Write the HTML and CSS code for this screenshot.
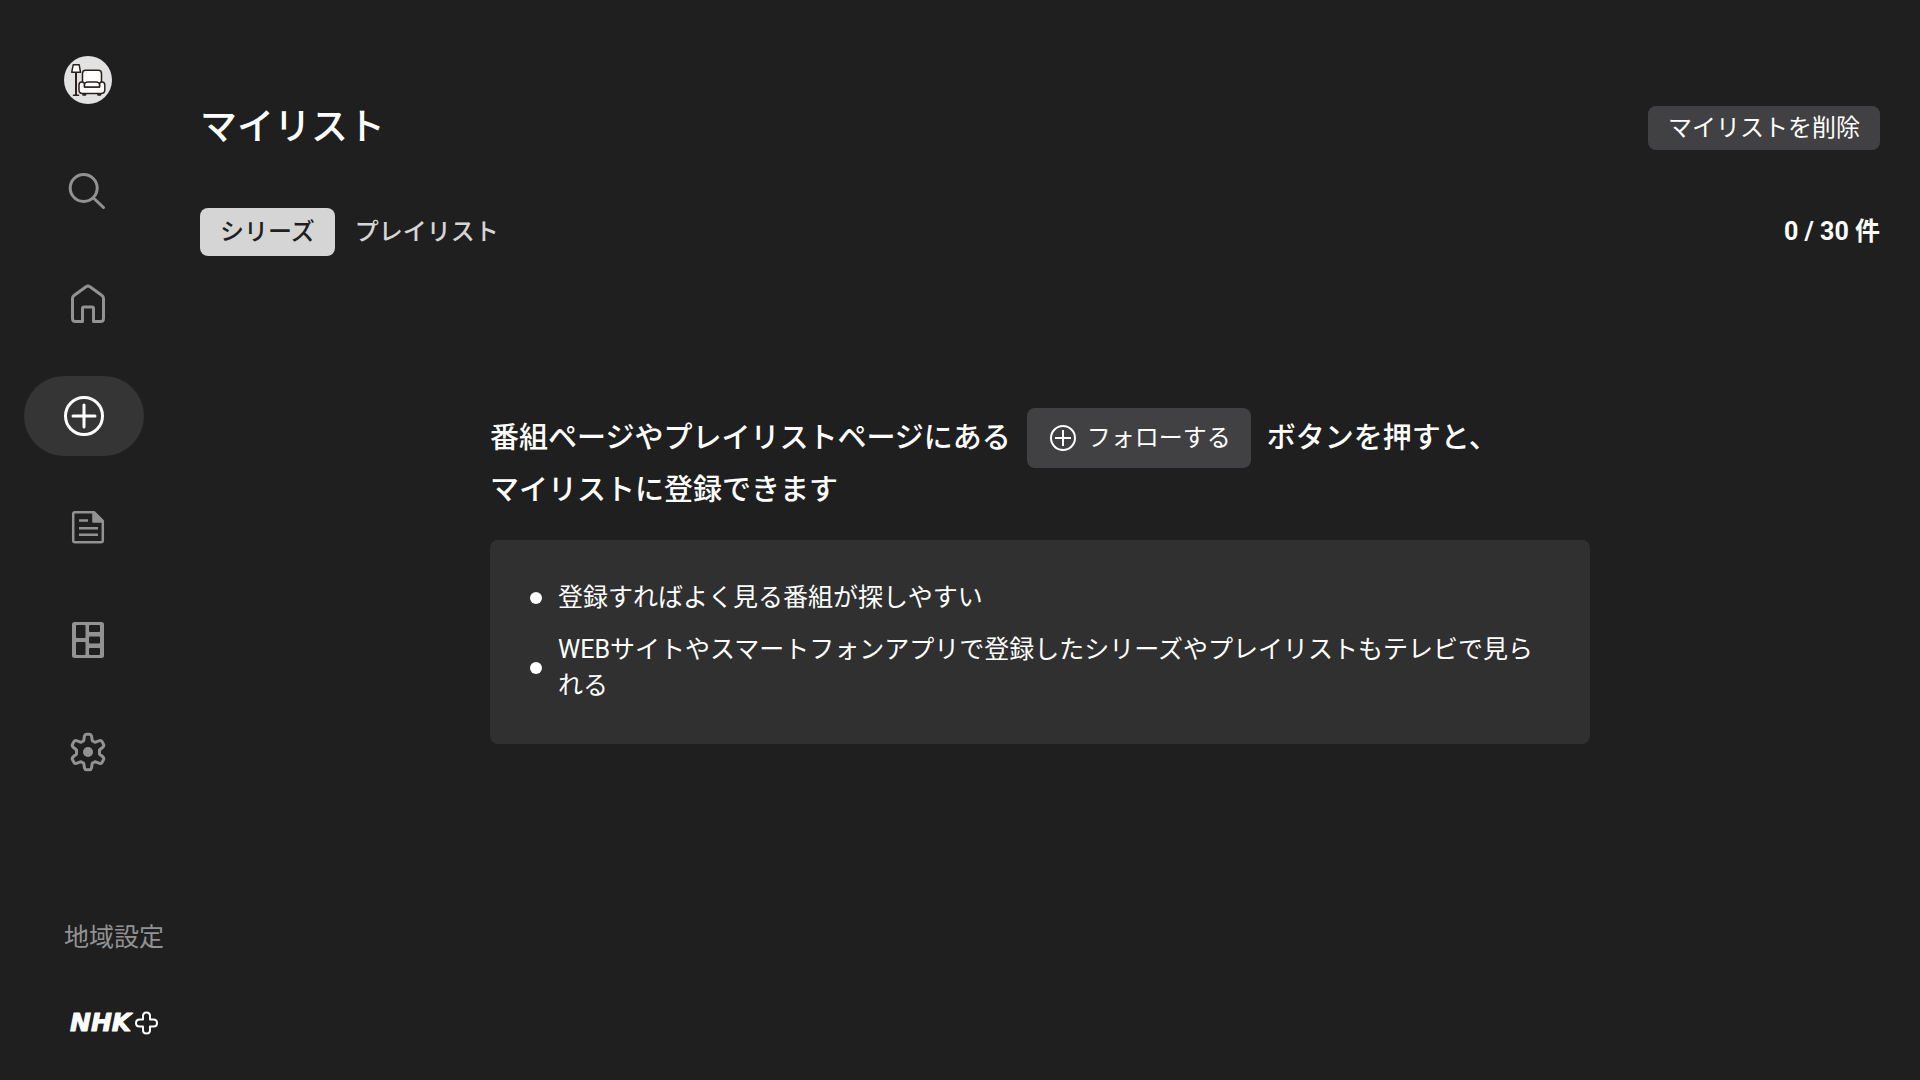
FILE: index.html
```
<!DOCTYPE html>
<html lang="ja">
<head>
    <meta charset="UTF-8">
    <meta name="viewport" content="width=device-width, initial-scale=1.0">
    <title>マイリスト | NHK+</title>
    <link rel="stylesheet" href="styles.css">
</head>
<body>
    <aside class="sidebar">
        <nav class="menu">
            <a class="menu-item" href="#" aria-label="プロフィール">
                <svg width="48" height="48" viewBox="0 0 48 48" fill="#fff" stroke="#2b211e" stroke-width="1.5" stroke-linejoin="round" stroke-linecap="round">
                    <circle cx="24" cy="24" r="24" fill="#e2e2e2" stroke="none"/>
                    <path d="M12 17v22" stroke-width="2"/>
                    <path d="M9.500 39.300h5M9.200 8.800h6l1.300 7.500H7.700z"/>
                    <path d="M19 37.500h2.500v1.500H19zM34 37.500h2.500v1.500H34z"/>
                    <path d="M18.500 28V17.500q0-3.200 3.200-3.200h12.600q3.200 0 3.200 3.200V28z"/>
                    <path d="M20.500 31v-2.500q0-2.500-2.700-2.500-2.800 0-2.800 3v5q0 3.500 3.500 3.500h18.500q3.800 0 3.800-3.500v-5q0-3-2.800-3-2.500 0-2.500 2.500V31z"/>
                    <path d="M20.500 31v-2q0-3 3.500-3h8q3.500 0 3.500 3v2z"/>
                </svg>
            </a>
            <a class="menu-item" href="#" aria-label="検索">
                <svg width="40" height="40" viewBox="0 0 40 40" fill="none" stroke="currentColor" stroke-width="3" stroke-linecap="round">
                    <circle cx="15.700" cy="16" r="13.500"/>
                    <path d="M25.500 26L35.500 35.500"/>
                </svg>
            </a>
            <a class="menu-item" href="#" aria-label="ホーム">
                <svg width="40" height="40" viewBox="0 0 40 40" fill="none" stroke="currentColor" stroke-width="3" stroke-linejoin="round">
                    <path d="M7.500 37.500q-3 0-3-3V14.500q0-2 1.500-3L18 2.800q2-1.600 4 0L34 11.500q1.500 1 1.500 3V34.500q0 3-3 3H25.500V24.500q0-1.500-1.500-1.500h-8q-1.500 0-1.500 1.500V37.500z"/>
                </svg>
            </a>
            <a class="menu-item active" href="#" aria-label="マイリスト" aria-current="page">
                <svg width="40" height="40" viewBox="0 0 40 40" fill="none" stroke="currentColor" stroke-width="3" stroke-linecap="round">
                    <circle cx="20" cy="20" r="18.500"/>
                    <path d="M20 9v22M9 20h22"/>
                </svg>
            </a>
            <a class="menu-item" href="#" aria-label="ニュース">
                <svg width="40" height="40" viewBox="0 0 40 40" fill="none" stroke="currentColor" stroke-width="2.500" stroke-linejoin="round">
                    <path d="M26 4.200H7q-1.800 0-1.800 1.800v26.500q0 1.800 1.800 1.800h26q1.800 0 1.800-1.800V13z"/>
                    <path d="M25 4.200V14h10z" fill="currentColor" stroke-width="1.500"/>
                    <path d="M11 12.500h9M11 20.300h19M11 26.700h19"/>
                </svg>
            </a>
            <a class="menu-item" href="#" aria-label="ジャンル">
                <svg width="40" height="40" viewBox="0 0 40 40">
                    <rect x="4" y="2" width="32" height="36" rx="2.500" fill="currentColor"/>
                    <g fill="#1f1f1f">
                        <rect x="8" y="5" width="9.500" height="13" rx="1"/>
                        <rect x="8" y="22" width="9.500" height="13" rx="1"/>
                        <rect x="21" y="5" width="11" height="7" rx="1"/>
                        <rect x="21" y="16.500" width="11" height="7" rx="1"/>
                        <rect x="21" y="28" width="11" height="7" rx="1"/>
                    </g>
                </svg>
            </a>
            <a class="menu-item" href="#" aria-label="設定">
                <svg width="40" height="40" viewBox="0 0 40 40" fill="none" stroke="currentColor" stroke-width="3" stroke-linejoin="round">
                    <path d="M16.500 4Q17 2.300 18.500 2.300H21.500Q23 2.300 23.500 4L24.300 8.700L27 10.300L31.500 8.600Q33.200 8.200 34 9.600L35.600 12.400Q36.200 13.800 35 15L31.500 18V22L35 25Q36.200 26.200 35.600 27.600L34 30.400Q33.200 31.800 31.500 31.400L27 29.700L24.300 31.300L23.500 36Q23 37.700 21.500 37.700H18.500Q17 37.700 16.500 36L15.700 31.300L13 29.700L8.500 31.400Q6.800 31.800 6 30.400L4.400 27.600Q3.800 26.200 5 25L8.500 22V18L5 15Q3.800 13.800 4.400 12.400L6 9.600Q6.800 8.200 8.500 8.600L13 10.300L15.700 8.700Z"/>
                    <circle cx="20" cy="20" r="5" fill="currentColor" stroke="none"/>
                </svg>
            </a>
        </nav>
        <div class="sidebar-bottom">
            <a class="region" href="#">地域設定</a>
            <svg class="logo" width="96" height="32" viewBox="0 0 96 32" role="img" aria-label="NHK+">
                <text class="logo-text" x="6" y="23">NHK</text>
                <path d="M79 8q0-3.500 3.500-3.500T86 8v3.500h3.500q3.500 0 3.500 3.500t-3.500 3.500H86V22q0 3.500-3.500 3.500T79 22v-3.500h-3.500q-3.500 0-3.500-3.500t3.500-3.500H79z" fill="none" stroke="#fff" stroke-width="2" stroke-linejoin="round"/>
            </svg>
        </div>
    </aside>

    <main class="content">
        <header class="header">
            <h1>マイリスト</h1>
            <button class="delete-btn" type="button">マイリストを削除</button>
        </header>

        <div class="toolbar">
            <div class="tabs" role="tablist">
                <button class="tab selected" type="button" role="tab" aria-selected="true">シリーズ</button>
                <button class="tab" type="button" role="tab" aria-selected="false">プレイリスト</button>
            </div>
            <p class="count">0 / 30 件</p>
        </div>

        <section class="guide">
            <div class="guide-title">
                <div class="guide-row">
                    <span>番組ページやプレイリストページにある</span>
                    <button class="follow-btn" type="button">
                        <svg width="32" height="32" viewBox="0 0 32 32" fill="none" stroke="currentColor" stroke-width="2">
                            <circle cx="16" cy="16" r="12"/>
                            <path d="M16 8v16M8 16h16"/>
                        </svg>
                        フォローする
                    </button>
                    <span>ボタンを押すと、</span>
                </div>
                <p>マイリストに登録できます</p>
            </div>
            <ul class="guide-list">
                <li>登録すればよく見る番組が探しやすい</li>
                <li>WEBサイトやスマートフォンアプリで登録したシリーズやプレイリストもテレビで見られる</li>
            </ul>
        </section>
    </main>
</body>
</html>
```
FILE: styles.css
```
* {
    box-sizing: border-box;
    margin: 0;
    padding: 0;
}
body {
    display: flex;
    min-height: 100vh;
    background-color: #1f1f1f;
    color: #fff;
    font-family: Roboto, "Noto Sans CJK JP", sans-serif;
    font-size: 25px;
    line-height: 36px;
}
a {
    color: #929292;
    text-decoration: none;
}
button {
    border: none;
    border-radius: 8px;
    color: #fff;
    font-family: inherit;
    font-size: 24px;
    line-height: 36px;
    cursor: pointer;
}
svg {
    display: block;
    flex-shrink: 0;
}

/* sidebar */
.sidebar {
    display: flex;
    flex-direction: column;
    justify-content: space-between;
    flex-shrink: 0;
    width: 200px;
    padding: 40px 0;
}
.menu {
    display: flex;
    flex-direction: column;
    gap: 32px;
    padding-left: 24px;
}
.menu-item {
    display: flex;
    align-items: center;
    justify-content: center;
    width: 120px;
    height: 80px;
    padding-left: 8px;
    border-radius: 40px;
}
.menu-item.active {
    padding-left: 0;
    background-color: #353535;
    color: #fff;
}
.sidebar-bottom {
    display: flex;
    flex-direction: column;
    gap: 52px;
    padding-left: 64px;
}
.logo-text {
    fill: #fff;
    stroke: #fff;
    stroke-width: 1px;
    stroke-linejoin: round;
    font: italic bold 25px "DejaVu Sans", sans-serif;
}

/* main */
.content {
    flex: 1;
    padding: 96px 40px 40px 0;
}
.header,
.toolbar {
    display: flex;
    align-items: center;
    justify-content: space-between;
}
.header {
    height: 64px;
}
h1 {
    font-size: 37px;
    line-height: 56px;
    font-weight: 500;
}
.delete-btn {
    padding: 4px 20px;
    background-color: #414143;
}
.toolbar {
    margin-top: 48px;
}
.tabs {
    display: flex;
}
.tab {
    padding: 6px 20px;
    background-color: transparent;
    color: #d5d5d5;
    font-weight: 500;
}
.tab.selected {
    background-color: #d5d5d5;
    color: #1f1f1f;
}
.count {
    font-weight: bold;
}

.guide {
    max-width: 1100px;
    margin: 152px auto 0;
}
.guide-title {
    display: flex;
    flex-direction: column;
    gap: 4px;
    font-size: 29px;
    font-weight: 500;
}
.guide-row {
    display: flex;
    align-items: center;
    gap: 16px;
}
.follow-btn {
    display: flex;
    align-items: center;
    gap: 8px;
    padding: 12px 20px;
    background-color: #414143;
}
.guide-list {
    display: flex;
    flex-direction: column;
    gap: 16px;
    margin-top: 32px;
    padding: 40px;
    border-radius: 8px;
    background-color: #303030;
    list-style: none;
}
.guide-list li {
    display: flex;
    align-items: center;
    gap: 16px;
}
.guide-list li::before {
    content: "";
    flex-shrink: 0;
    width: 12px;
    height: 12px;
    border-radius: 50%;
    background-color: #fff;
}
```
